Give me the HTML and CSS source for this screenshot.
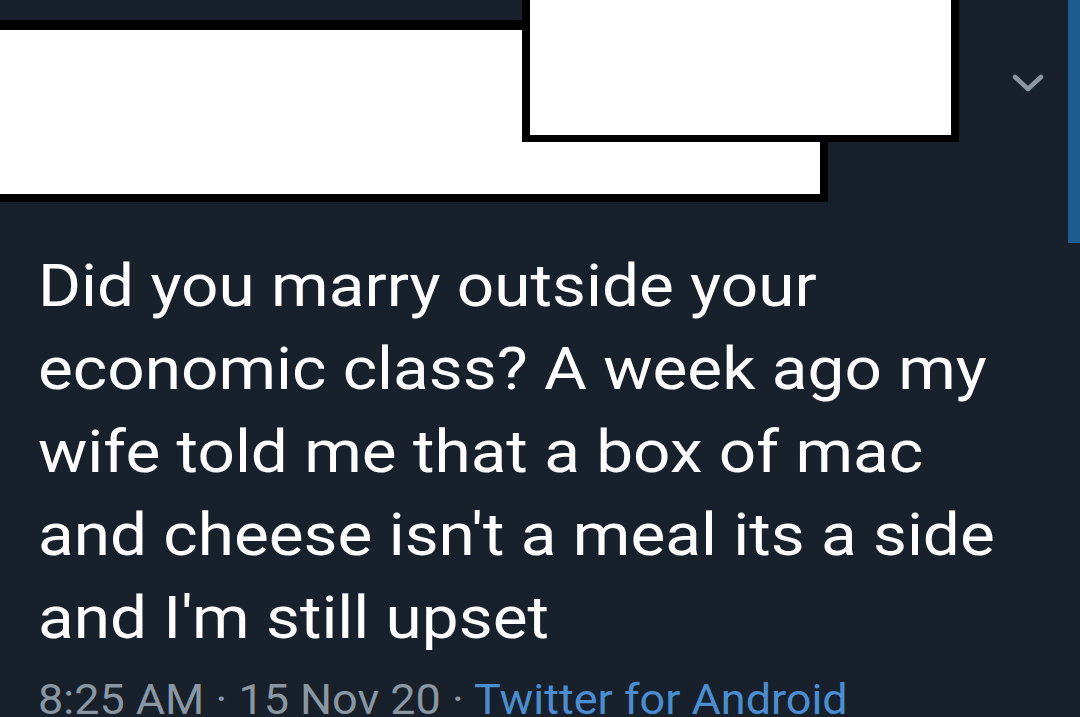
FILE: index.html
```html
<!DOCTYPE html>
<html lang="en">
<head>
    <meta charset="UTF-8">
    <title>Tweet</title>
    <link rel="stylesheet" href="styles.css">
</head>
<body>
    <div class="tweet">
        <!-- Cabecera con nombre y usuario tapados -->
        <div class="header">
            <div class="redactions">
                <div class="redact redact-name"></div>
                <div class="redact redact-handle"></div>
            </div>
            <svg class="chevron" width="36" height="22" viewBox="0 0 36 22">
                <path d="M5 5 L18 17 L31 5" fill="none" stroke="#8a97a3" stroke-width="4.5" stroke-linecap="round" stroke-linejoin="round"/>
            </svg>
        </div>

        <p class="text">Did you marry outside your<br>economic class? A week ago my<br>wife told me that a box of mac<br>and cheese isn't a meal its a side<br>and I'm still upset</p>

        <div class="meta">8:25 AM · 15 Nov 20 · <span class="source">Twitter for Android</span></div>

        <div class="scrollbar"></div>
    </div>
</body>
</html>
```

FILE: styles.css
```css
* { box-sizing: border-box; margin: 0; padding: 0; }
html, body {
    width: 1080px;
    height: 717px;
    overflow: hidden;
}
body {
    background: #18202b;
    font-family: Roboto, "Liberation Sans", sans-serif;
    color: #fdfdfd;
}
.tweet {
    position: relative;
    height: 717px;
}
.header {
    display: flex;
    align-items: flex-start;
    height: 244px;
}
.redactions {
    position: relative;
    width: 958px;
}
.redact {
    background: #fff;
    border: 0 solid #000;
    box-sizing: content-box;
}
.redact-name {
    margin-top: 20px;
    width: 820px;
    height: 164px;
    border-top-width: 10px;
    border-right-width: 8px;
    border-bottom-width: 8px;
}
.redact-handle {
    position: absolute;
    top: 0;
    left: 522px;
    width: 421px;
    height: 135px;
    border-left-width: 8px;
    border-right-width: 8px;
    border-bottom-width: 7px;
}
.chevron {
    margin-top: 72px;
    margin-left: 52px;
}
.text {
    margin-left: 38px;
    font-size: 60px;
    line-height: 83px;
    white-space: nowrap;
    transform: scaleX(1.095);
    transform-origin: left center;
}
.meta {
    margin-left: 38px;
    margin-top: 16px;
    font-size: 42px;
    line-height: 50px;
    color: #8a97a3;
    white-space: nowrap;
    transform: scaleX(1.07);
    transform-origin: left center;
}
.source { color: #4a8ed0; }
.scrollbar {
    position: absolute;
    top: 0;
    right: 0;
    width: 12px;
    height: 243px;
    background: #1d5c8f;
}
```
